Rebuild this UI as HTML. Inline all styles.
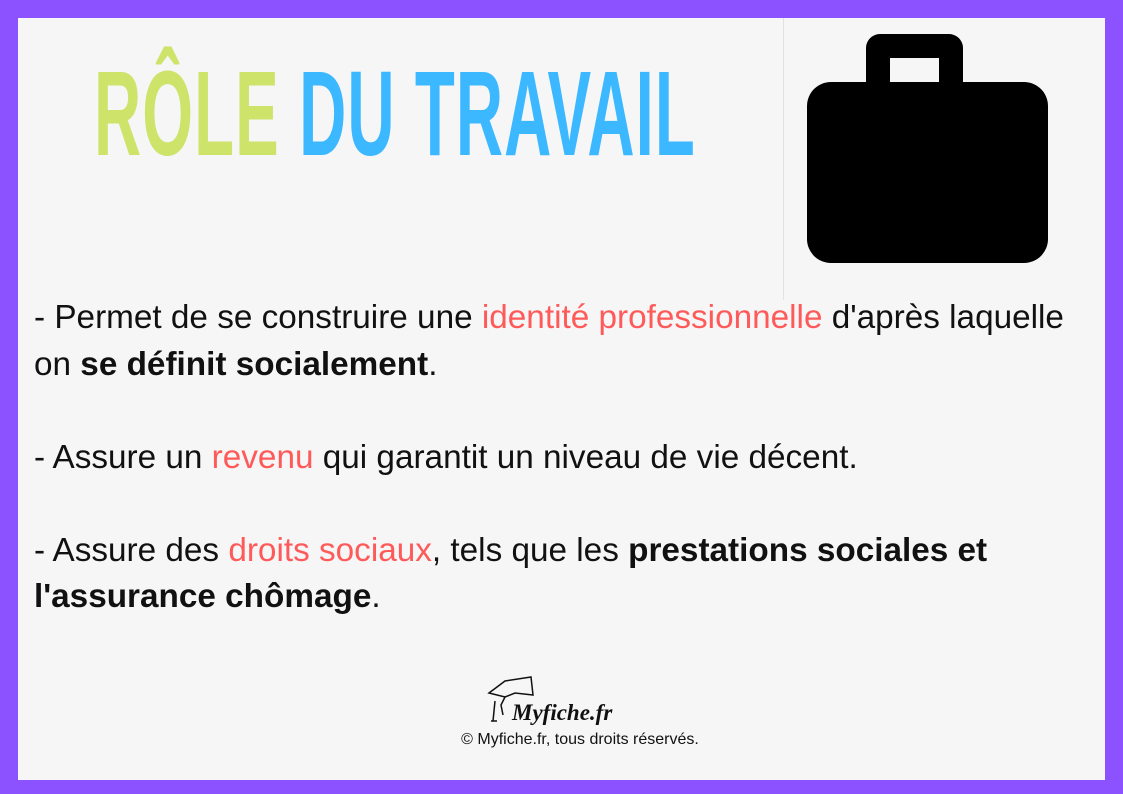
<!DOCTYPE html>
<html><head><meta charset="utf-8"><style>
body{margin:0;width:1123px;height:794px;background:#8c52ff;position:relative;overflow:hidden;font-family:"Liberation Sans",sans-serif}
.card{position:absolute;left:18px;top:18px;width:1087px;height:762px;background:#f6f6f6}
.title{position:absolute;left:94px;top:48px;font-weight:bold;font-size:121px;line-height:130px;transform:scaleX(0.54);transform-origin:0 0;white-space:nowrap;letter-spacing:2px}
.g{color:#cde36a}.b{color:#3bb8ff}
.vl{position:absolute;left:783px;top:18px;width:1px;height:282px;background:#e2e2e2}
.txt{position:absolute;left:34px;top:295px;width:1062px;font-size:33.3px;line-height:46.5px;color:#111}
.r{color:#ff5a5a}
p{margin:0 0 46.5px 0}
.copy{position:absolute;left:0;width:1160px;top:731px;text-align:center;font-size:16px;color:#111}
.logo{position:absolute;left:512px;top:700px;font-family:"Liberation Serif",serif;font-style:italic;font-weight:bold;font-size:23px;color:#111}
</style></head><body>
<div class="card"></div>
<div class="vl"></div>
<div class="title"><span class="g">RÔLE</span> <span class="b">DU TRAVAIL</span></div>
<svg style="position:absolute;left:807px;top:34px" width="242" height="230" viewBox="0 0 242 230">
<path fill="#000" d="M86 0h56a14 14 0 0 1 14 14v34h-24v-24h-49v24h-24v-34a14 14 0 0 1 14-14z"/>
<rect x="0" y="48" width="241" height="181" rx="24" fill="#000"/>
</svg>
<div class="txt">
<p>- Permet de se construire une <span class="r">identité professionnelle</span> d'après laquelle on <b>se définit socialement</b>.</p>
<p>- Assure un <span class="r">revenu</span> qui garantit un niveau de vie décent.</p>
<p>- Assure des <span class="r">droits sociaux</span>, tels que les <b>prestations sociales et l'assurance chômage</b>.</p>
</div>
<svg style="position:absolute;left:487px;top:675px" width="50" height="50" viewBox="0 0 50 50">
<path d="M2 18 L18 6 L44 2 L46 20 L28 18 L18 22 Z M18 22 L14 30 L16 40 M8 26 L6 46 M4 46h6" fill="none" stroke="#111" stroke-width="1.5"/>
</svg>
<div class="logo">Myfiche.fr</div>
<div class="copy">© Myfiche.fr, tous droits réservés.</div>
</body></html>
